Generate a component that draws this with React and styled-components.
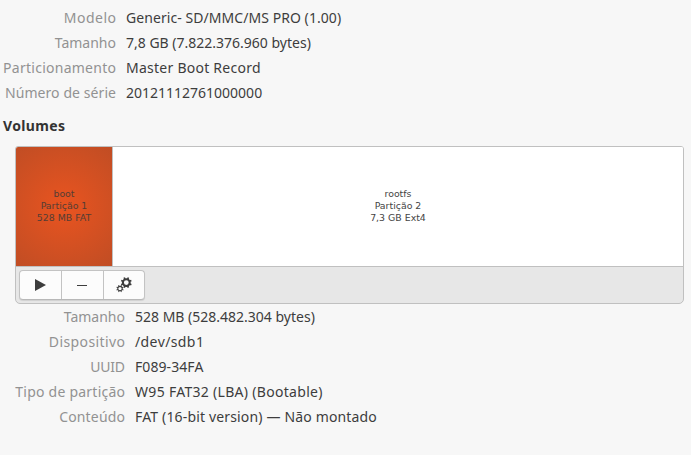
import React from "react";
import styled, { createGlobalStyle } from "styled-components";

const GlobalStyle = createGlobalStyle`
  * { box-sizing: border-box; }
  body {
    margin: 0;
    background: #f7f7f7;
    color: #3d3d3d;
    font-family: "Noto Sans", "Open Sans", sans-serif;
    font-size: 14px;
  }
`;

const Page = styled.main`
  width: 691px;
  height: 455px;
  padding-top: 5px;
  overflow: hidden;
`;

const Details = styled.dl`
  display: grid;
  grid-template-columns: ${(p) => p.$labelWidth}px 1fr;
  column-gap: 10px;
  grid-auto-rows: 25px;
  line-height: 25px;
  margin: 0;
  white-space: nowrap;
`;

const Label = styled.dt`
  color: #929292;
  text-align: right;
  letter-spacing: ${(p) => p.$track || 0}px;
  margin-right: ${(p) => -(p.$track || 0)}px;
`;

const Value = styled.dd`
  margin: 0;
  letter-spacing: ${(p) => p.$track || 0}px;
`;

const Heading = styled.h2`
  margin: 8px 0 8px 3px;
  font-size: 14px;
  font-weight: 700;
  line-height: 25px;
  letter-spacing: 0.35px;
  color: #333;
`;

const VolumeCard = styled.section`
  width: 669px;
  height: 158px;
  margin-left: 15px;
  border: 1px solid #c0c0c0;
  border-radius: 3px 3px 5px 5px;
  background: #e7e7e7;
  overflow: hidden;
`;

const VolumeMap = styled.div`
  display: flex;
  height: 120px;
  border-bottom: 1px solid #c0c0c0;
  background: #fff;
`;

const Partition = styled.div`
  display: flex;
  flex-direction: column;
  align-items: center;
  justify-content: center;
  flex: ${(p) => (p.$selected ? "0 0 97px" : "1")};
  padding-bottom: 2px;
  border-right: ${(p) => (p.$selected ? "1px solid #c0c0c0" : "0")};
  background: ${(p) =>
    p.$selected ? "radial-gradient(circle at 50% 50%, #e95420 0, #c04d24 77px)" : "#fff"};
  color: ${(p) => (p.$selected ? "#553d34" : "#444")};
  font-family: "DejaVu Sans", sans-serif;
  font-size: 9.4px;
  line-height: 12px;
`;

const Toolbar = styled.div`
  display: flex;
  padding: 3px;
`;

const ButtonGroup = styled.div`
  display: flex;
  width: 126px;
  height: 30px;
  border: 1px solid #c3c3c3;
  border-bottom-color: #b8b8b8;
  border-radius: 4px;
  background: #fcfcfc;
  box-shadow: 0 1px 1px rgba(0, 0, 0, 0.1);
  overflow: hidden;
`;

const ToolButton = styled.button`
  display: flex;
  align-items: center;
  justify-content: center;
  flex: 0 0 ${(p) => p.$width}px;
  padding: 0 1px 0 0;
  border: 0;
  border-right: ${(p) => (p.$last ? "0" : "1px solid #c3c3c3")};
  background: transparent;
  color: #3d3d3d;
`;

const Icon = styled.svg`
  display: block;
  width: 16px;
  height: 16px;
`;

const drive = [
  ["Modelo", "Generic- SD/MMC/MS PRO (1.00)", 0.5, 0.06],
  ["Tamanho", "7,8 GB (7.822.376.960 bytes)", 0, 0],
  ["Particionamento", "Master Boot Record", 0.26, 0.25],
  ["Número de série", "20121112761000000", 0.08, 0],
];

const volume = [
  ["Tamanho", "528 MB (528.482.304 bytes)", 0, 0],
  ["Dispositivo", "/dev/sdb1", 0.4, 0.4],
  ["UUID", "F089-34FA", -0.2, 0.08],
  ["Tipo de partição", "W95 FAT32 (LBA) (Bootable)", 0.23, 0.3],
  ["Conteúdo", "FAT (16-bit version) — Não montado", 0.17, 0.16],
];

function DetailList({ rows, labelWidth }) {
  return (
    <Details $labelWidth={labelWidth}>
      {rows.map(([label, value, labelTrack, valueTrack]) => (
        <React.Fragment key={label}>
          <Label $track={labelTrack}>{label}</Label>
          <Value $track={valueTrack}>{value}</Value>
        </React.Fragment>
      ))}
    </Details>
  );
}

function Gear({ x, y, r, width, tooth }) {
  return (
    <g transform={`translate(${x} ${y})`} fill="none" stroke="currentColor">
      <circle r={r} strokeWidth={width} />
      {[0, 45, 90, 135, 180, 225, 270, 315].map((angle) => (
        <path
          key={angle}
          d={`M0 ${-r}V${-(r + tooth)}`}
          strokeWidth={width * 0.85}
          transform={`rotate(${angle + 22.5})`}
        />
      ))}
    </g>
  );
}

export default function App() {
  return (
    <>
      <GlobalStyle />
      <Page>
        <DetailList rows={drive} labelWidth={116} />
        <Heading>Volumes</Heading>
        <VolumeCard>
          <VolumeMap>
            <Partition $selected>
              <span>boot</span>
              <span>Partição 1</span>
              <span>528 MB FAT</span>
            </Partition>
            <Partition>
              <span>rootfs</span>
              <span>Partição 2</span>
              <span>7,3 GB Ext4</span>
            </Partition>
          </VolumeMap>
          <Toolbar>
            <ButtonGroup>
              <ToolButton $width={42} aria-label="Montar">
                <Icon viewBox="0 0 16 16">
                  <path d="M3 2v12l11-6z" fill="currentColor" />
                </Icon>
              </ToolButton>
              <ToolButton $width={42} aria-label="Excluir">
                <Icon viewBox="0 0 16 16">
                  <path d="M3 8h10v1H3z" fill="currentColor" />
                </Icon>
              </ToolButton>
              <ToolButton $width={41} $last aria-label="Opções">
                <Icon viewBox="0 0 16 16">
                  <Gear x={10.3} y={5.6} r={3.4} width={2} tooth={2.1} />
                  <Gear x={4} y={11.6} r={2.2} width={1.1} tooth={1.5} />
                </Icon>
              </ToolButton>
            </ButtonGroup>
          </Toolbar>
        </VolumeCard>
        <DetailList rows={volume} labelWidth={125} />
      </Page>
    </>
  );
}
